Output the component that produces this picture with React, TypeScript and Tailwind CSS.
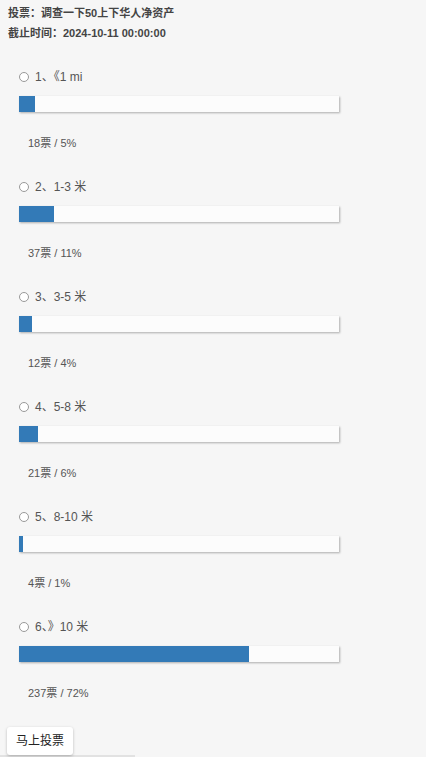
const options = [
  { label: "1、《1 mi", votes: 18, pct: 5 },
  { label: "2、1-3 米", votes: 37, pct: 11 },
  { label: "3、3-5 米", votes: 12, pct: 4 },
  { label: "4、5-8 米", votes: 21, pct: 6 },
  { label: "5、8-10 米", votes: 4, pct: 1 },
  { label: "6、》10 米", votes: 237, pct: 72 },
];

const font = { fontFamily: '"Liberation Sans", "Noto Sans CJK SC", sans-serif' };

export default function App() {
  return (
    <div className="min-h-[757px] bg-[#f6f6f6] text-[#555] overflow-hidden" style={font}>
      <div className="px-[8px] pt-[3px]">
        {/* ── Header ── */}
        <div className="text-[11px] font-bold leading-[20px] text-[#444]">
          <p>投票：调查一下50上下华人净资产</p>
          <p>截止时间：2024-10-11 00:00:00</p>
        </div>

        {/* ── Options ── */}
        <div className="mt-[26px] flex flex-col gap-[28px]">
          {options.map((o) => (
            <div key={o.label}>
              <label className="flex items-center h-[16px] pl-[11px] text-[12px] leading-[16px]">
                <span className="w-[10px] h-[10px] rounded-full border border-[#999] bg-white mr-[6px]" />
                <span>{o.label}</span>
              </label>
              <div className="mt-[11px] ml-[11px] w-[320px] h-[16px] bg-[#fcfcfc] shadow-[1px_1px_2px_rgba(0,0,0,0.3)]">
                <div className="h-full bg-[#337ab7]" style={{ width: `${Math.max(o.pct * 3.2, 4)}px` }} />
              </div>
              <p className="mt-[23px] pl-[20px] text-[11px] leading-[16px]">
                {o.votes}票 / {o.pct}%
              </p>
            </div>
          ))}
        </div>
      </div>

      {/* ── Submit ── */}
      <div className="mt-[26px] pl-[7px]">
        <button className="w-[66px] h-[28px] bg-white rounded-[3px] shadow-[0_1px_3px_rgba(0,0,0,0.25)] text-[12px] text-[#222]">
          马上投票
        </button>
      </div>
      <div className="w-[135px] h-[3px] bg-[#e2e2e2]" />
    </div>
  );
}
